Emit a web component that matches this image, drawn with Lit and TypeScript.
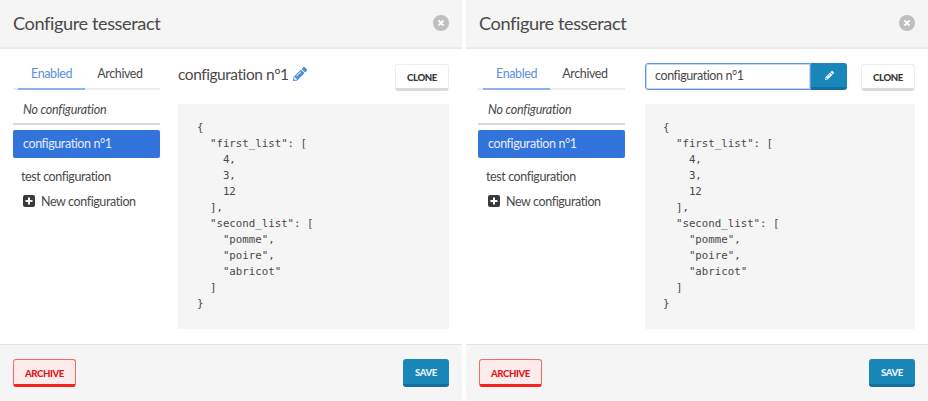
import { LitElement, html, css, svg } from "lit";
import { customElement, property } from "lit/decorators.js";

const PENCIL = svg`<path d="M497.9 142.1l-46.1 46.1c-4.7 4.7-12.3 4.7-17 0l-111-111c-4.7-4.7-4.7-12.3 0-17l46.1-46.1c18.7-18.7 49.1-18.7 67.9 0l60.1 60.1c18.8 18.7 18.8 49.1 0 67.9zM284.2 99.8L21.6 362.4.4 483.9c-2.9 16.4 11.4 30.6 27.8 27.8l121.5-21.3 262.6-262.6c4.7-4.7 4.7-12.3 0-17l-111-111c-4.8-4.7-12.4-4.7-17.1 0zM124.1 339.9c-5.5-5.5-5.5-14.3 0-19.8l154-154c5.5-5.5 14.3-5.5 19.8 0s5.5 14.3 0 19.8l-154 154c-5.5 5.5-14.3 5.5-19.8 0zM88 424h48v36.3l-64.5 11.3-31.1-31.1L51.7 376H88v48z"/>`;

const CODE = `{
  "first_list": [
    4,
    3,
    12
  ],
  "second_list": [
    "pomme",
    "poire",
    "abricot"
  ]
}`;

@customElement("config-panel")
class ConfigPanel extends LitElement {
  @property({ type: Boolean, reflect: true }) editing = false;

  static styles = css`
    :host { display: flex; flex-direction: column; width: 462px; height: 401px; background: #fff; color: #4a4a4a; font-family: "Lato", sans-serif; }
    .head { height: 46px; flex: none; background: #f5f5f5; border-bottom: 2px solid #ebebeb; padding: 0 13px 1px; display: flex; align-items: center; justify-content: space-between; }
    .title { font-size: 18.2px; letter-spacing: -0.42px; color: #4a4a4a; }
    .close { width: 16px; height: 16px; display: block; }
    .body { flex: 1; display: flex; gap: 18px; padding: 0 13px; min-height: 0; }
    :host([editing]) .body { gap: 20px; padding-left: 12px; }
    :host([editing]) .code { padding-left: 18px; }
    .side { width: 147px; flex: none; font-size: 12.5px; letter-spacing: -0.4px; }
    .tabs { display: flex; height: 41px; padding: 0 5px; border-bottom: 2px solid #ebebeb; box-sizing: border-box; }
    .tab { height: 41px; box-sizing: border-box; padding-top: 16px; text-align: center; line-height: 18px; }
    .tab.on { width: 67px; color: #5b8fe0; border-bottom: 2px solid #8fb2ea; }
    .tab.off { width: 70px; }
    .none { font-style: italic; letter-spacing: -0.22px; height: 33px; border-bottom: 2px solid #d9d9d9; padding-left: 10px; line-height: 40px; }
    .sel { margin-top: 5px; height: 28px; line-height: 27px; background: #3273dc; color: #e4edfb; padding-left: 10px; border-radius: 2px; }
    .row { margin-top: 10px; height: 18px; line-height: 18px; padding-left: 8px; }
    .new { margin-top: 6px; height: 18px; display: flex; align-items: center; gap: 6px; padding-left: 10px; }
    .new svg { width: 12px; height: 12px; display: block; }
    .main { flex: 1; min-width: 0; display: flex; flex-direction: column; }
    .bar { height: 55px; flex: none; display: flex; align-items: flex-start; justify-content: space-between; }
    .name { display: flex; align-items: center; gap: 4px; font-size: 15.5px; letter-spacing: -0.45px; height: 20px; margin-top: 15px; }
    .name svg { width: 14px; height: 14px; fill: #4a90d9; display: block; }
    .btn { font-size: 9.6px; font-weight: 900; letter-spacing: -0.4px; text-transform: uppercase; box-sizing: border-box; padding-top: 2px; display: flex; align-items: center; justify-content: center; border-radius: 3px; }
    .clone { margin-top: 15px; width: 54px; height: 27px; background: #fff; color: #363636; border: 1px solid #ececec; border-bottom: 3px solid #dbdbdb; }
    .edit { display: flex; margin-top: 14px; }
    .input { width: 166px; height: 27px; box-sizing: border-box; border: 1px solid #5f95e6; border-radius: 3px 0 0 3px; box-shadow: 0 0 0 1px #c4d8f6 inset; background: #fff; padding-left: 9px; font-size: 12.5px; letter-spacing: -0.4px; line-height: 24px; }
    .pen { width: 36px; height: 27px; box-sizing: border-box; background: #1a87bb; border-bottom: 3px solid #136f9b; border-radius: 0 3px 3px 0; display: flex; align-items: center; justify-content: center; }
    .pen svg { width: 9px; height: 9px; fill: #fff; display: block; }
    .code { flex: none; height: 225px; box-sizing: border-box; margin: 0; background: #f5f5f5; padding: 16px 19px; font-family: "DejaVu Sans Mono", monospace; font-size: 10.75px; line-height: 16px; color: #4a4a4a; }
    .foot { height: 56px; flex: none; background: #f5f5f5; border-top: 1px solid #e2e2e2; padding: 0 13px; display: flex; align-items: center; justify-content: space-between; }
    .archive { width: 63px; height: 28px; background: #feecec; color: #e0161c; border: 1px solid #f96a66; border-bottom: 3px solid #f5221d; }
    .save { width: 46px; height: 28px; background: #1a87bb; color: #e6f2f8; border-bottom: 3px solid #136f9b; }
  `;

  render() {
    return html`
      <div class="head">
        <span class="title">Configure tesseract</span>
        <svg class="close" viewBox="0 0 16 16"><circle cx="8" cy="8" r="8" fill="#bfbfbf"/><path d="M5.4 5.4l5.2 5.2M10.6 5.4l-5.2 5.2" stroke="#fff" stroke-width="2" fill="none"/></svg>
      </div>
      <div class="body">
        <div class="side">
          <div class="tabs"><div class="tab on">Enabled</div><div class="tab off">Archived</div></div>
          <div class="none">No configuration</div>
          <div class="sel">configuration n°1</div>
          <div class="row">test configuration</div>
          <div class="new">
            <svg viewBox="0 0 12 12"><rect width="12" height="12" rx="2" fill="#3a3a3a"/><path d="M6 2.5v7M2.5 6h7" stroke="#fff" stroke-width="2"/></svg>
            <span>New configuration</span>
          </div>
        </div>
        <div class="main">
          <div class="bar">
            ${this.editing
              ? html`<div class="edit"><div class="input">configuration n°1</div><div class="pen"><svg viewBox="0 0 512 512">${PENCIL}</svg></div></div>`
              : html`<div class="name"><span>configuration n°1</span><svg viewBox="0 0 512 512">${PENCIL}</svg></div>`}
            <div class="btn clone">Clone</div>
          </div>
          <pre class="code">${CODE}</pre>
        </div>
      </div>
      <div class="foot">
        <div class="btn archive">Archive</div>
        <div class="btn save">Save</div>
      </div>
    `;
  }
}

@customElement("app-root")
export class AppRoot extends LitElement {
  static styles = css`
    :host { display: flex; gap: 4px; width: 928px; height: 401px; background: #fff; overflow: hidden; }
  `;
  render() {
    return html`<config-panel></config-panel><config-panel editing></config-panel>`;
  }
}
void ConfigPanel;
